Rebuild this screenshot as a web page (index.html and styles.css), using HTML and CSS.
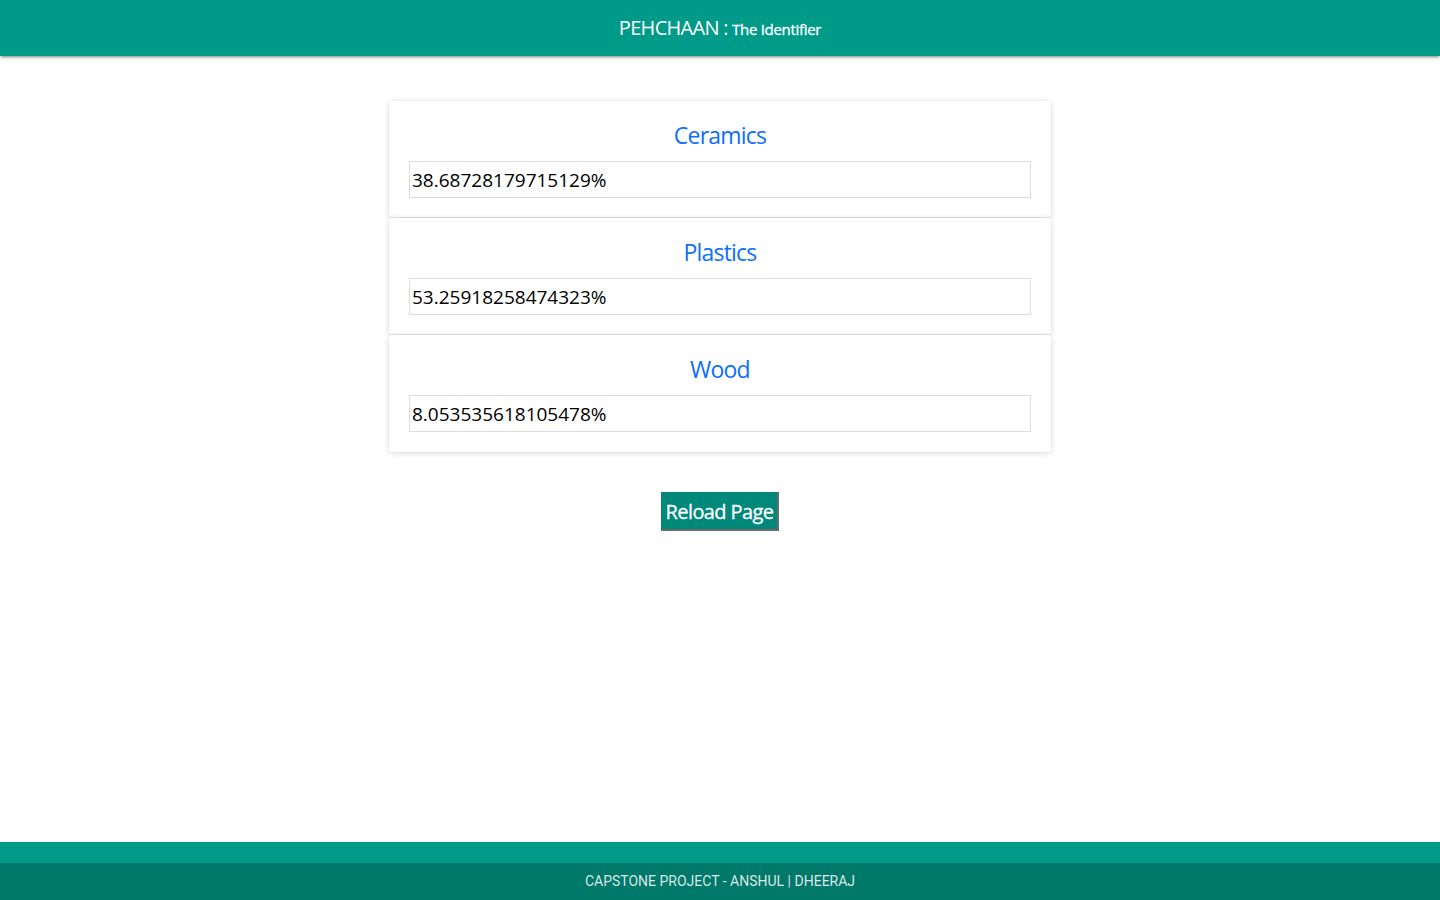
FILE: index.html
```html
<!DOCTYPE html>
<html lang="en">
<head>
<meta charset="utf-8">
<title>PEHCHAAN : The Identifier</title>
<link rel="stylesheet" href="styles.css">
</head>
<body>
<div class="page">
  <header class="topbar">
    <span class="brand">PEHCHAAN :</span> <span class="tagline">The Identifier</span>
  </header>
  <main class="content">
    <div class="cards">
      <div class="card">
        <h2 class="card-title">Ceramics</h2>
        <div class="value">38.68728179715129%</div>
      </div>
      <div class="card">
        <h2 class="card-title">Plastics</h2>
        <div class="value">53.25918258474323%</div>
      </div>
      <div class="card">
        <h2 class="card-title">Wood</h2>
        <div class="value">8.053535618105478%</div>
      </div>
    </div>
    <div class="actions">
      <button class="reload">Reload Page</button>
    </div>
  </main>
  <footer class="footer">
    <div class="footer-top"></div>
    <div class="footer-copy">CAPSTONE PROJECT - ANSHUL | DHEERAJ</div>
  </footer>
</div>
</body>
</html>
```
FILE: styles.css
```css
html, body {
  margin: 0;
  padding: 0;
}
body {
  font-family: "Open Sans", "Noto Sans", sans-serif;
  background: #fff;
  color: #000;
}
.page {
  min-height: 100vh;
  display: flex;
  flex-direction: column;
}
.topbar {
  height: 56px;
  line-height: 56px;
  background: #009a88;
  color: #fff;
  text-align: center;
  box-shadow: 0 2px 2px 0 rgba(0,0,0,0.14), 0 3px 1px -2px rgba(0,0,0,0.12), 0 1px 5px 0 rgba(0,0,0,0.2);
  position: relative;
  z-index: 2;
}
.brand {
  font-size: 20px;
  letter-spacing: -0.7px;
}
.tagline {
  font-size: 15px;
  letter-spacing: -0.3px;
  -webkit-text-stroke: 0.3px #fff;
}
.content {
  flex: 1;
  display: flex;
  flex-direction: column;
  align-items: center;
  padding-top: 45px;
}
.cards {
  width: 662px;
  display: flex;
  flex-direction: column;
  gap: 1px;
}
.card {
  background: #fff;
  border-radius: 3px;
  padding: 20px;
  box-shadow: 0 1px 6px 0 rgba(0,0,0,0.16), 0 0 2px 0 rgba(0,0,0,0.06);
  display: flex;
  flex-direction: column;
  height: 116px;
  box-sizing: border-box;
}
.card:last-child {
  height: 117px;
}
.card-title {
  margin: 0 0 9px 0;
  height: 31px;
  flex: none;
  line-height: 28px;
  font-size: 23px;
  font-weight: 400;
  color: #0d6efd;
  text-align: center;
  letter-spacing: -0.8px;
}
.value {
  height: 37px;
  flex: none;
  box-sizing: border-box;
  border: 1px solid #dcdcdc;
  font-size: 19px;
  line-height: 36px;
  padding-left: 2px;
  letter-spacing: 0;
}
.actions {
  margin-top: 40px;
}
.reload {
  font-family: inherit;
  font-size: 20px;
  letter-spacing: -0.6px;
  color: #fff;
  background: #00897b;
  height: 39px;
  width: 118px;
  padding: 0;
  border-top: 1px solid #00897b;
  border-left: 1px solid #00897b;
  border-right: 2px solid #6b6b6b;
  border-bottom: 2px solid #6b6b6b;
  -webkit-text-stroke: 0.3px #fff;
  cursor: pointer;
}
.footer-top {
  height: 21px;
  background: #009a88;
}
.footer-copy {
  height: 37px;
  line-height: 37px;
  background: #00796b;
  color: rgba(255,255,255,0.85);
  text-align: center;
  font-family: Roboto, "Liberation Sans", sans-serif;
  font-size: 14px;
}
```
